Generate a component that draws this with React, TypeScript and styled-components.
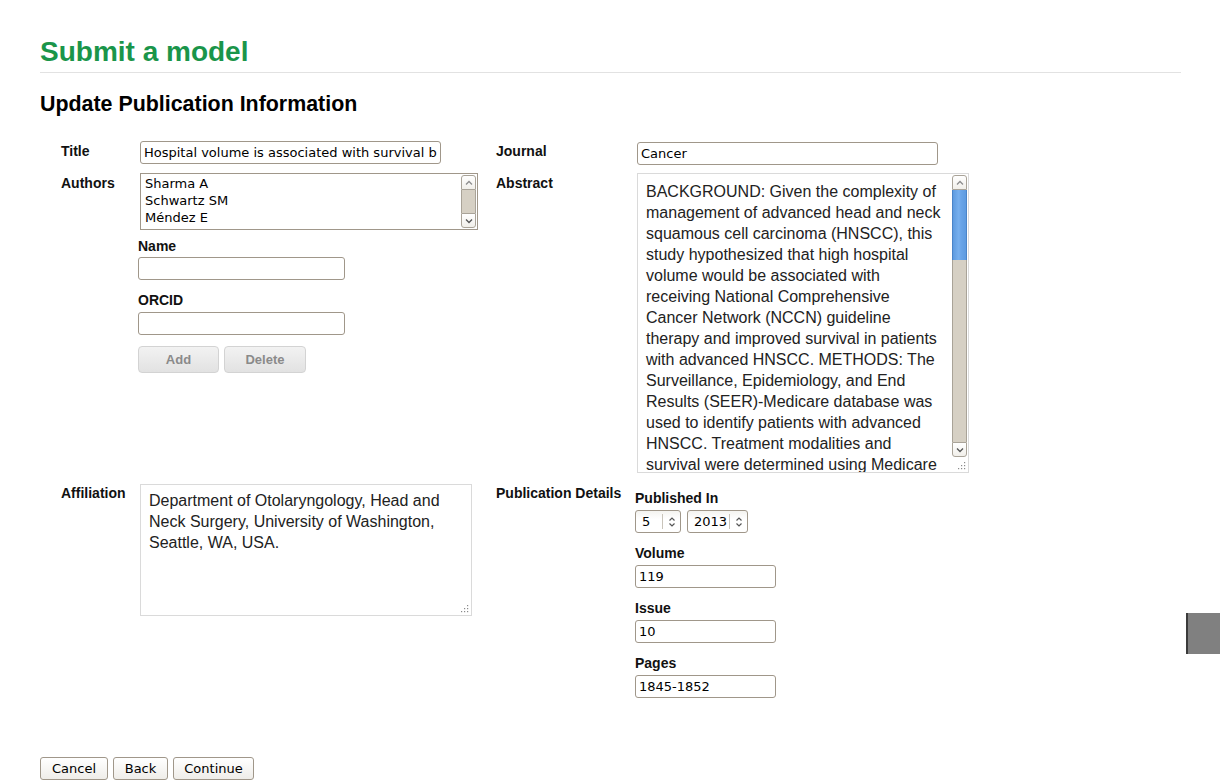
import React from "react";
import styled, { createGlobalStyle } from "styled-components";

const GlobalStyle = createGlobalStyle`
  html, body { margin: 0; padding: 0; background: #fff; }
  body { font-family: "Liberation Sans", Arial, sans-serif; color: #000; }
  * { box-sizing: border-box; }
`;

const Page = styled.div`
  padding: 0 39px 0 40px;
  width: 1220px;
  height: 781px;
  overflow: hidden;
`;

const Title = styled.h1`
  margin: 36px 0 0;
  padding: 0 0 4px;
  font-size: 28px;
  line-height: 32px;
  font-weight: bold;
  color: #1a954a;
  border-bottom: 1px solid #e2e2e2;
`;

const Subtitle = styled.h2`
  margin: 19px 0 0;
  font-size: 21.4px;
  line-height: 24px;
  font-weight: bold;
  color: #000;
`;

const Form = styled.div`
  margin-top: 25px;
  padding-left: 21px;
  display: flex;
  flex-direction: column;
`;

const Row = styled.div<{ $gap: number }>`
  display: grid;
  grid-template-columns: 79px 356px 141px 1fr;
  align-items: start;
  margin-top: ${(p) => p.$gap}px;
`;

const Label = styled.div<{ $pad?: number }>`
  font-size: 14px;
  line-height: 16px;
  font-weight: bold;
  color: #111;
  padding-top: ${(p) => (p.$pad ?? 2)}px;
  white-space: nowrap;
`;

const FieldLabel = styled.div`
  font-size: 14px;
  line-height: 16px;
  font-weight: bold;
  color: #111;
  margin-bottom: 4px;
`;

const Nested = styled.div<{ $shift?: number; $pad?: number }>`
  display: flex;
  flex-direction: column;
  margin-left: ${(p) => (p.$shift ?? 0)}px;
  padding-top: ${(p) => (p.$pad ?? 0)}px;
`;

const Field = styled.div<{ $mb?: number }>`
  display: flex;
  flex-direction: column;
  margin-bottom: ${(p) => (p.$mb ?? 12)}px;
`;

const TextInput = styled.input<{ $w: number }>`
  width: ${(p) => p.$w}px;
  height: 23px;
  margin: 0;
  padding: 1px 3px;
  font-family: "DejaVu Sans", sans-serif;
  font-size: 13px;
  color: #000;
  background: #fff;
  border: 1px solid #a0978a;
  border-radius: 3px;
  outline: none;
`;

const ListBox = styled.div`
  width: 338px;
  height: 57px;
  border: 1px solid #a0978a;
  background: #fff;
  display: flex;
`;

const Options = styled.div`
  flex: 1;
  padding: 1px 0 0 4px;
  font-family: "DejaVu Sans", sans-serif;
  font-size: 13px;
  line-height: 17px;
  color: #000;
  overflow: hidden;
`;

const ScrollCol = styled.div`
  width: 15px;
  margin: 1px 1px 1px 0;
  display: flex;
  flex-direction: column;
`;

const ScrollButton = styled.div<{ $dir: "up" | "down" }>`
  height: 15px;
  flex: none;
  background: linear-gradient(#ffffff, #f1efea);
  border: 1px solid #a9a398;
  border-radius: ${(p) => (p.$dir === "up" ? "3px 3px 0 0" : "0 0 3px 3px")};
  display: flex;
  align-items: center;
  justify-content: center;
`;

const Thumb = styled.div<{ $h: number; $blue?: boolean }>`
  height: ${(p) => p.$h}px;
  flex: none;
  background: ${(p) =>
    p.$blue
      ? "linear-gradient(90deg, #5e9be0 0%, #78b0ee 45%, #6aa5e8 60%, #5e9be0 100%)"
      : "#d8d2c6"};
  border-left: 1px solid ${(p) => (p.$blue ? "#4a84c8" : "#a9a398")};
  border-right: 1px solid ${(p) => (p.$blue ? "#4a84c8" : "#a9a398")};
`;

const Track = styled.div`
  flex: 1;
  background: #d6d0c4;
  border-left: 1px solid #a9a398;
  border-right: 1px solid #a9a398;
`;

const GripCell = styled.div`
  height: 14px;
  flex: none;
  display: flex;
  align-items: flex-end;
  justify-content: flex-end;
`;

const AreaBox = styled.div<{ $w: number; $h: number }>`
  position: relative;
  width: ${(p) => p.$w}px;
  height: ${(p) => p.$h}px;
  border: 1px solid #dadada;
  background: #fff;
  display: flex;
`;

const Area = styled.textarea<{ $pt: number }>`
  flex: 1;
  height: 100%;
  margin: 0;
  border: none;
  outline: none;
  resize: none;
  overflow: hidden;
  padding: ${(p) => p.$pt}px 8px 0 8px;
  font-family: "Liberation Sans", Arial, sans-serif;
  font-size: 16px;
  line-height: 21px;
  color: #222;
  background: transparent;
`;

const GripCorner = styled.div`
  position: absolute;
  right: 1px;
  bottom: 1px;
  width: 12px;
  height: 12px;
  display: flex;
`;

const ButtonRow = styled.div`
  display: flex;
  gap: 5px;
`;

const SoftButton = styled.button<{ $w: number }>`
  width: ${(p) => p.$w}px;
  height: 27px;
  margin: 0;
  padding: 0;
  border: 1px solid #d3d3d3;
  border-radius: 4px;
  background: linear-gradient(#f2f2f2, #e2e2e2);
  font-family: "Liberation Sans", Arial, sans-serif;
  font-size: 13px;
  font-weight: bold;
  color: #8a8a8a;
`;

const FormButton = styled.button<{ $w: number }>`
  width: ${(p) => p.$w}px;
  height: 23px;
  margin: 0;
  padding: 0;
  border: 1px solid #a0978a;
  border-radius: 3px;
  background: linear-gradient(#ffffff, #efede9);
  font-family: "DejaVu Sans", sans-serif;
  font-size: 13px;
  color: #000;
`;

const Footer = styled.div`
  display: flex;
  gap: 5px;
  margin-top: 59px;
`;

const SpinRow = styled.div`
  display: flex;
  gap: 6px;
`;

const Spin = styled.div<{ $w: number }>`
  width: ${(p) => p.$w}px;
  height: 23px;
  border: 1px solid #a0978a;
  border-radius: 3px;
  background: linear-gradient(#f4f3f0, #ffffff 40%);
  display: flex;
  align-items: stretch;
  font-family: "DejaVu Sans", sans-serif;
  font-size: 13px;
  color: #000;
`;

const SpinValue = styled.div`
  flex: 1;
  padding-left: 6px;
  display: flex;
  align-items: center;
`;

const SpinArrows = styled.div`
  width: 18px;
  border-left: 1px solid #c9c4ba;
  margin: 3px 0;
  display: flex;
  align-items: center;
  justify-content: center;
`;

const SideTab = styled.div`
  position: fixed;
  right: 0;
  top: 613px;
  width: 34px;
  height: 41px;
  background: #808080;
  border-left: 2px solid #3b3b3b;
`;

const Chevron = ({ dir }: { dir: "up" | "down" }) => (
  <svg width="8" height="6" viewBox="0 0 8 6">
    <path
      d={dir === "up" ? "M1 4.5 L4 1.5 L7 4.5" : "M1 1.5 L4 4.5 L7 1.5"}
      fill="none"
      stroke={dir === "up" ? "#8d8d8d" : "#555"}
      strokeWidth="1.3"
    />
  </svg>
);

const SpinGlyph = () => (
  <svg width="8" height="12" viewBox="0 0 8 12">
    <path d="M1.5 4.5 L4 2 L6.5 4.5" fill="none" stroke="#555" strokeWidth="1.2" />
    <path d="M1.5 7.5 L4 10 L6.5 7.5" fill="none" stroke="#555" strokeWidth="1.2" />
  </svg>
);

const Grip = () => (
  <svg width="12" height="12" viewBox="0 0 12 12">
    {[
      [9, 3],
      [6, 6],
      [9, 6],
      [3, 9],
      [6, 9],
      [9, 9],
    ].map(([x, y]) => (
      <rect key={`${x}-${y}`} x={x} y={y} width="1.2" height="1.2" fill="#8a8a8a" />
    ))}
  </svg>
);

const abstractText =
  "BACKGROUND: Given the complexity of management of advanced head and neck squamous cell carcinoma (HNSCC), this study hypothesized that high hospital volume would be associated with receiving National Comprehensive Cancer Network (NCCN) guideline therapy and improved survival in patients with advanced HNSCC. METHODS: The Surveillance, Epidemiology, and End Results (SEER)-Medicare database was used to identify patients with advanced HNSCC. Treatment modalities and survival were determined using Medicare claims and SEER data. Hospital volume was categorized into tertiles.";

export default function App() {
  return (
    <>
      <GlobalStyle />
      <Page>
        <Title>Submit a model</Title>
        <Subtitle>Update Publication Information</Subtitle>
        <Form>
          <Row $gap={0}>
            <Label>Title</Label>
            <div>
              <TextInput
                $w={301}
                readOnly
                defaultValue="Hospital volume is associated with survival but not multimodality therapy in Medicare patients with advanced head and neck cancer"
              />
            </div>
            <Label>Journal</Label>
            <div>
              <TextInput $w={301} readOnly defaultValue="Cancer" style={{ marginTop: 1 }} />
            </div>
          </Row>

          <Row $gap={8}>
            <Label>Authors</Label>
            <div>
              <ListBox>
                <Options>
                  <div>Sharma A</div>
                  <div>Schwartz SM</div>
                  <div>Méndez E</div>
                </Options>
                <ScrollCol>
                  <ScrollButton $dir="up">
                    <Chevron dir="up" />
                  </ScrollButton>
                  <Track />
                  <ScrollButton $dir="down">
                    <Chevron dir="down" />
                  </ScrollButton>
                </ScrollCol>
              </ListBox>
              <Nested $shift={-2} $pad={8}>
                <Field>
                  <FieldLabel style={{ marginBottom: 3 }}>Name</FieldLabel>
                  <TextInput $w={207} />
                </Field>
                <Field $mb={11}>
                  <FieldLabel>ORCID</FieldLabel>
                  <TextInput $w={207} />
                </Field>
                <ButtonRow>
                  <SoftButton $w={81}>Add</SoftButton>
                  <SoftButton $w={82}>Delete</SoftButton>
                </ButtonRow>
              </Nested>
            </div>
            <Label>Abstract</Label>
            <AreaBox $w={332} $h={300}>
              <Area $pt={7} readOnly defaultValue={abstractText} />
              <ScrollCol>
                <ScrollButton $dir="up">
                  <Chevron dir="up" />
                </ScrollButton>
                <Thumb $h={70} $blue />
                <Track />
                <ScrollButton $dir="down">
                  <Chevron dir="down" />
                </ScrollButton>
                <GripCell>
                  <Grip />
                </GripCell>
              </ScrollCol>
            </AreaBox>
          </Row>

          <Row $gap={11}>
            <Label $pad={1}>Affiliation</Label>
            <AreaBox $w={332} $h={132}>
              <Area
                $pt={5}
                readOnly
                defaultValue="Department of Otolaryngology, Head and Neck Surgery, University of Washington, Seattle, WA, USA."
              />
              <GripCorner>
                <Grip />
              </GripCorner>
            </AreaBox>
            <Label $pad={1}>Publication Details</Label>
            <Nested $shift={-2} $pad={6}>
              <Field>
                <FieldLabel>Published In</FieldLabel>
                <SpinRow>
                  <Spin $w={46}>
                    <SpinValue>5</SpinValue>
                    <SpinArrows>
                      <SpinGlyph />
                    </SpinArrows>
                  </Spin>
                  <Spin $w={61}>
                    <SpinValue>2013</SpinValue>
                    <SpinArrows>
                      <SpinGlyph />
                    </SpinArrows>
                  </Spin>
                </SpinRow>
              </Field>
              <Field>
                <FieldLabel>Volume</FieldLabel>
                <TextInput $w={141} readOnly defaultValue="119" />
              </Field>
              <Field>
                <FieldLabel>Issue</FieldLabel>
                <TextInput $w={141} readOnly defaultValue="10" />
              </Field>
              <Field $mb={0}>
                <FieldLabel>Pages</FieldLabel>
                <TextInput $w={141} readOnly defaultValue="1845-1852" />
              </Field>
            </Nested>
          </Row>
        </Form>
        <Footer>
          <FormButton $w={68}>Cancel</FormButton>
          <FormButton $w={55}>Back</FormButton>
          <FormButton $w={81}>Continue</FormButton>
        </Footer>
      </Page>
      <SideTab />
    </>
  );
}
